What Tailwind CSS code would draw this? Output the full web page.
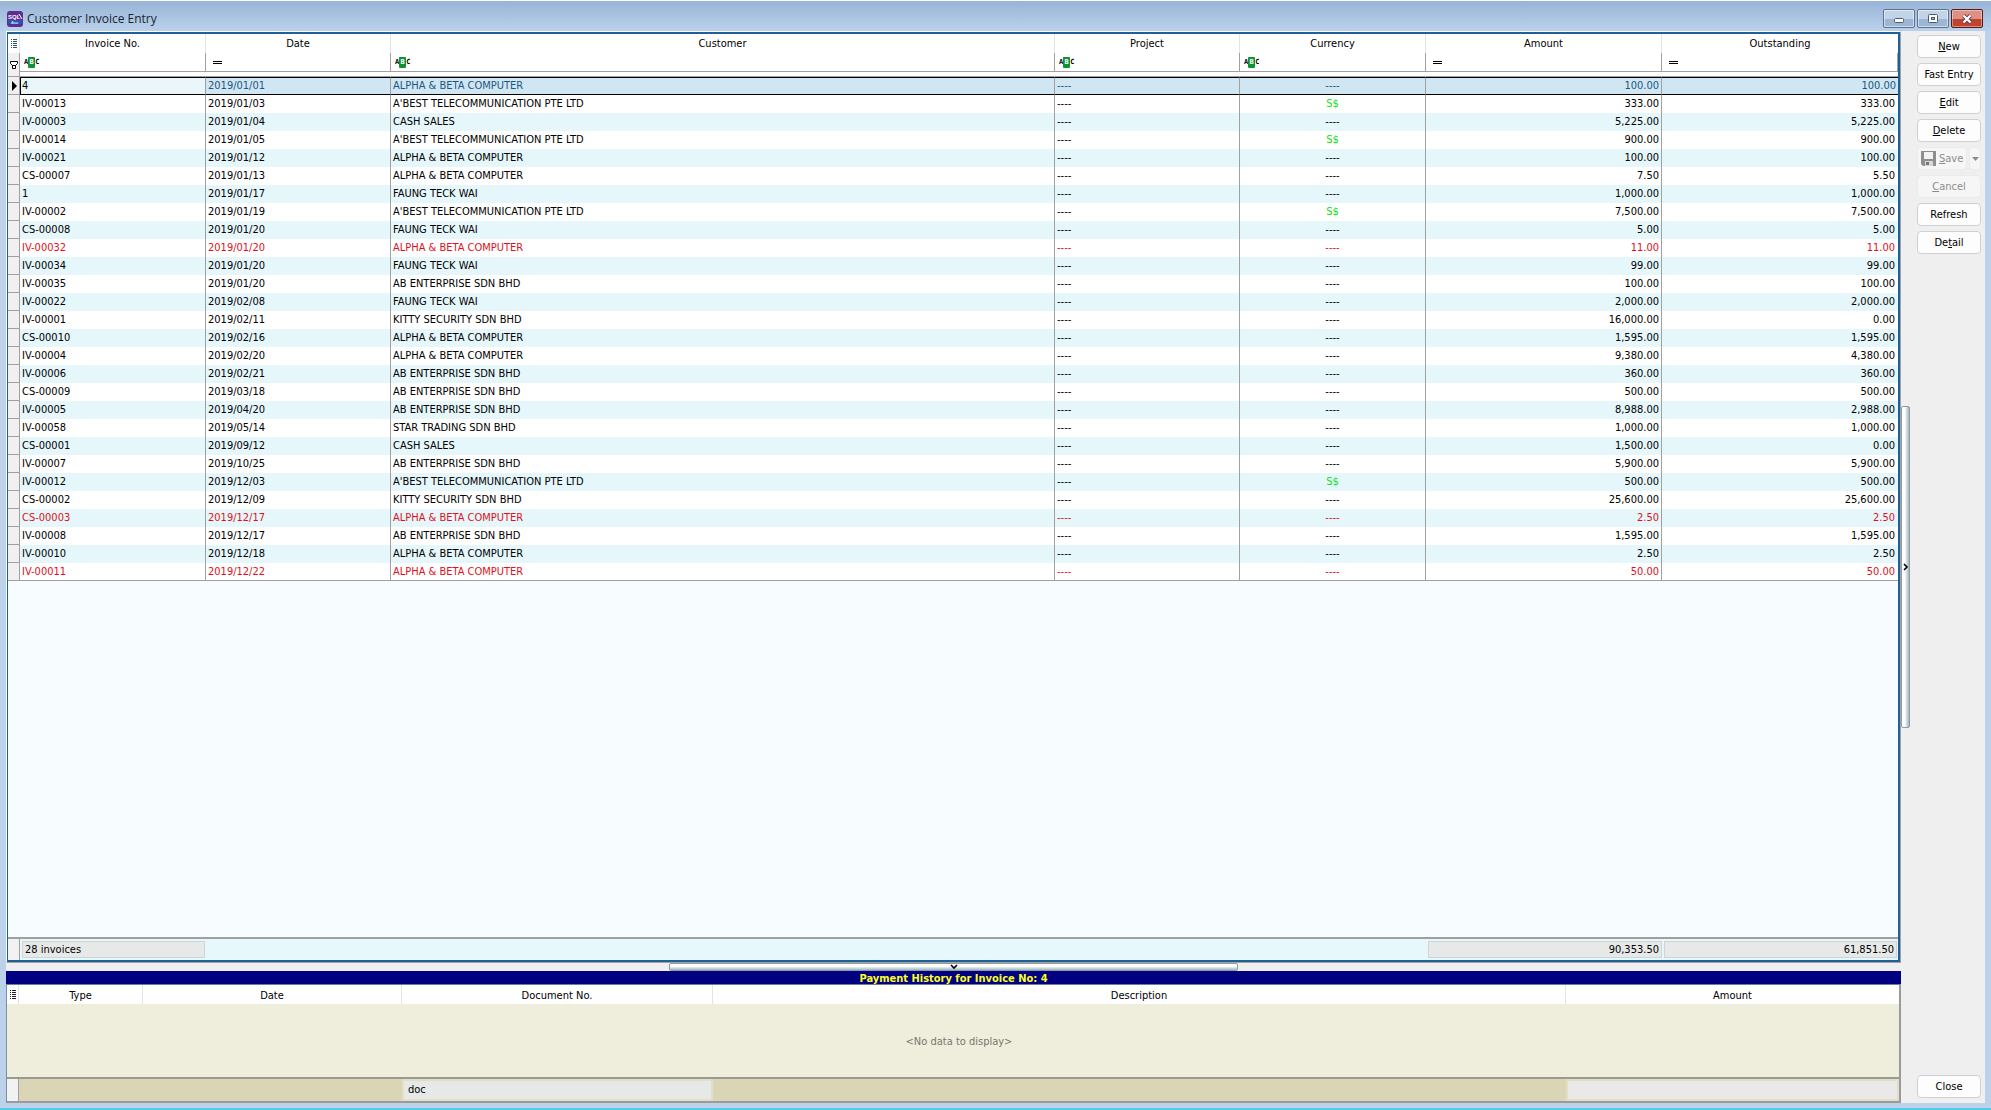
<!DOCTYPE html>
<html lang="en">

<head>
  <meta charset="utf-8">
  <meta name="viewport" content="width=device-width, initial-scale=1">
  <title>Customer Invoice Entry</title>
  <script src="https://cdn.jsdelivr.net/npm/@tailwindcss/browser@4"></script>
</head>

<body class="h-screen flex flex-col overflow-hidden bg-[#bcd1ea] border-b-2 border-[#58c8e8] font-['DejaVu_Sans_Condensed',sans-serif] text-[11px] leading-4 text-black">

  <header class="flex items-center justify-between h-[31px] shrink-0 pt-[5px] pl-[7px] pr-2 border-t border-white bg-linear-to-b from-[#98b4d6] to-[#b9d1eb]">
    <div class="flex items-center gap-1">
      <svg class="size-4" viewBox="0 0 16 16" aria-hidden="true">
        <rect width="16" height="16" rx="3" fill="#5d2d91" />
        <rect x="1" y="9" width="14" height="4" rx="1" fill="#2c56b5" />
        <text x="1" y="8" font-size="6" font-weight="bold" fill="#fff" font-family="Liberation Sans">SQL</text>
        <path d="M12 3l3 5" stroke="#fff" stroke-width="1" />
        <text x="4" y="13" font-size="4" font-weight="bold" fill="#cfe6ff" font-family="Liberation Sans">Acc</text>
      </svg>
      <h1 class="font-['Open_Sans',sans-serif] text-[12px] text-[#1a2433]">Customer Invoice Entry</h1>
    </div>
    <div class="flex gap-[2px]">
      <button aria-label="Minimize" class="w-8 h-[19px] flex items-center justify-center rounded-[2px] border border-[#5b7390] inset-ring inset-ring-white/50 bg-linear-to-b from-[#c3d4e9] from-50% to-[#9db6d3] to-50%">
        <svg class="w-3 h-3" viewBox="0 0 12 12"><rect x="1.5" y="5.5" width="9" height="4" rx="1" fill="#fff" stroke="#4d5b70" /></svg>
      </button>
      <button aria-label="Maximize" class="w-8 h-[19px] flex items-center justify-center rounded-[2px] border border-[#5b7390] inset-ring inset-ring-white/50 bg-linear-to-b from-[#c3d4e9] from-50% to-[#9db6d3] to-50%">
        <svg class="w-3 h-3" viewBox="0 0 12 12"><rect x="1.5" y="1.5" width="9" height="8" rx="1" fill="#fff" stroke="#4d5b70" /><rect x="4.5" y="4.5" width="3" height="2" fill="#9db6d3" stroke="#4d5b70" /></svg>
      </button>
      <button aria-label="Close window" class="w-8 h-[19px] flex items-center justify-center rounded-[2px] border border-[#5a1a1a] inset-ring inset-ring-white/40 bg-linear-to-b from-[#de9084] from-50% to-[#c04330] to-50%">
        <svg class="w-3 h-3" viewBox="0 0 12 12"><path d="M2.5 2.5l7 7M9.5 2.5l-7 7" stroke="#5a3a48" stroke-width="4" /><path d="M2.5 2.5l7 7M9.5 2.5l-7 7" stroke="#fff" stroke-width="2.4" /></svg>
      </button>
    </div>
  </header>

  <div class="flex-1 min-h-0 flex px-[6px] pb-[5px]">
    <div class="flex-1 min-w-0 flex flex-col bg-[#efefef]">

      <!-- invoice list -->
      <main class="flex-1 min-h-0 flex flex-col border border-t-white border-l-white border-r-[#a3a3a3] border-b-[#a3a3a3]">
        <div class="flex-1 min-h-0 flex flex-col border-2 border-l border-[#1f6096] bg-[#f6fcff]">
          <table class="w-full table-fixed border-separate border-spacing-0">
            <colgroup>
              <col class="w-3"><col class="w-[186px]"><col class="w-[185px]"><col>
              <col class="w-[185px]"><col class="w-[186px]"><col class="w-[236px]"><col class="w-[236px]">
            </colgroup>
            <thead class="bg-white">
              <tr id="head" class="h-[19px]">
                <th class="p-0 border-r border-[#e4e4e4]">
                  <svg class="block w-[11px] h-4" viewBox="0 0 11 16" aria-label="Columns"><path d="M3 3.500h1M5 3.500h4M3 5.500h1M5 5.500h4M3 7.500h1M5 7.500h4M3 9.500h1M5 9.500h4M3 11.500h1M5 11.500h4" stroke="#2a5673" /></svg>
                </th>
              </tr>
              <tr id="filters" class="h-[19px]">
                <td class="p-0 border-r border-[#a0a0a0] bg-[#f0f0f0]">
                  <svg class="block w-[11px] h-4" viewBox="0 0 11 16" aria-label="Filter"><path d="M2.500 6.500h7v2l-2 2h-3l-2-2zM4.500 10.500h3v3h-3z" fill="#fff" stroke="#000" /></svg>
                </td>
              </tr>
              <tr class="h-[5px]">
                <td class="p-0 border-r border-b border-[#a0a0a0] bg-[#f0f0f0]"></td>
                <td colspan="7" class="p-0 border-b border-[#a0a0a0]"></td>
              </tr>
            </thead>
            <tbody id="rows"></tbody>
          </table>
          <div class="flex-1"></div>
          <div class="flex h-[23px] border-t-2 border-[#a0a0a0] bg-[#e6f8fb]">
            <div class="w-3 border-r border-[#a0a0a0] bg-[#f2f2f2]"></div>
            <div class="w-[183px] m-[2px] mr-0 pl-[2px] border border-[#cfd4d4] bg-[#e7e9e8]">28 invoices</div>
            <div class="flex-1"></div>
            <div class="w-[234px] my-[2px] mr-[2px] pr-[2px] border border-[#cfd4d4] bg-[#e7e9e8] text-right">90,353.50</div>
            <div class="w-[233px] my-[2px] mr-[1px] pr-[2px] border border-[#cfd4d4] bg-[#e7e9e8] text-right">61,851.50</div>
          </div>
        </div>
      </main>

      <button aria-label="Toggle payment history" class="self-center w-[30%] h-2 flex items-center justify-center rounded-[2px] border border-[#8f9ba3] bg-linear-to-b from-white from-40% to-[#9fb6c0]">
        <svg class="w-2 h-[6px]" viewBox="0 0 8 6"><path d="M1 1l3 3 3-3" fill="none" stroke="#000" stroke-width="1.600" /></svg>
      </button>

      <!-- payment history -->
      <section class="shrink-0">
        <h2 class="h-[13px] leading-[15px] bg-[#000080] text-[#ffff20] font-bold text-center">Payment History for Invoice No: 4</h2>
        <table class="w-full table-fixed border-separate border-spacing-0 border-l border-r-2 border-y border-t-[#6f7f93] border-l-[#7f8fa3] border-r-[#9a9a9a] border-b-2 border-b-[#9a9a9a]">
          <colgroup>
            <col class="w-3"><col class="w-[124px]"><col class="w-[259px]"><col class="w-[311px]"><col><col class="w-[333px]">
          </colgroup>
          <thead class="bg-white">
            <tr class="h-[19px]">
              <th class="p-0 border-r border-[#e4e4e4]">
                <svg class="block w-[11px] h-4" viewBox="0 0 11 16" aria-label="Columns"><path d="M3 3.500h1M5 3.500h4M3 5.500h1M5 5.500h4M3 7.500h1M5 7.500h4M3 9.500h1M5 9.500h4M3 11.500h1M5 11.500h4" stroke="#222" /></svg>
              </th>
              <th class="p-0 pt-[2px] font-normal border-r border-[#e4e4e4]">Type</th>
              <th class="p-0 pt-[2px] font-normal border-r border-[#e4e4e4]">Date</th>
              <th class="p-0 pt-[2px] font-normal border-r border-[#e4e4e4]">Document No.</th>
              <th class="p-0 pt-[2px] font-normal border-r border-[#e4e4e4]">Description</th>
              <th class="p-0 pt-[2px] font-normal">Amount</th>
            </tr>
          </thead>
          <tbody>
            <tr class="h-[75px]">
              <td colspan="6" class="p-0 pt-[2px] pl-3 bg-[#efeedd] border-b-2 border-[#9a9a90] text-center text-[#77776c]">&lt;No data to display&gt;</td>
            </tr>
          </tbody>
          <tfoot>
            <tr class="h-[22px] bg-[#d9d5b5]">
              <td class="p-0 border-r border-[#a0a0a0] bg-[#f2f2f2]"></td>
              <td></td>
              <td></td>
              <td class="p-0 pl-1 border-2 border-[#e2dfc6] bg-[#e7e9e8] bg-clip-padding">doc</td>
              <td></td>
              <td class="p-0 border-2 border-[#e2dfc6] bg-[#e9e9e9]"></td>
            </tr>
          </tfoot>
        </table>
      </section>
    </div>

    <aside class="w-[84px] flex bg-[#efefef]">
      <button aria-label="Toggle button panel" class="self-center w-[9px] h-[30%] flex items-center justify-center rounded-[2px] border border-[#8f9ba3] bg-linear-to-r from-white from-40% to-[#9fb6c0]">
        <svg class="w-[6px] h-2" viewBox="0 0 6 8"><path d="M1 1l3 3-3 3" fill="none" stroke="#000" stroke-width="1.600" /></svg>
      </button>
      <div class="flex-1 flex flex-col gap-[5px] pt-1 pb-[5px] pl-[7px] pr-1">
        <button class="h-[23px] rounded border border-[#d0d0d0] bg-[#fdfdfd]"><u>N</u>ew</button>
        <button class="h-[23px] rounded border border-[#d0d0d0] bg-[#fdfdfd]">Fast Entry</button>
        <button class="h-[23px] rounded border border-[#d0d0d0] bg-[#fdfdfd]"><u>E</u>dit</button>
        <button class="h-[23px] rounded border border-[#d0d0d0] bg-[#fdfdfd]"><u>D</u>elete</button>
        <div class="flex gap-[2px] h-[23px] text-[#8c8c8c]">
          <button disabled class="flex-1 flex items-center gap-[3px] pl-[3px] rounded border border-[#ebebeb] bg-[#f6f6f6]">
            <svg class="size-[15px]" viewBox="0 0 15 15" aria-hidden="true">
              <path d="M0 0h15v15H2l-2-2z" fill="#8e8e8e" />
              <rect x="3" y="1" width="9" height="7" fill="#f2f2f2" />
              <rect x="4" y="10" width="8" height="5" fill="#d8d8d8" />
              <rect x="5" y="11" width="3" height="3" fill="#777" />
            </svg>
            <span><u>S</u>ave</span>
          </button>
          <button disabled aria-label="Save options" class="w-3 flex items-center justify-center rounded border border-[#ebebeb] bg-[#f6f6f6]">
            <svg class="w-[7px] h-1" viewBox="0 0 7 4"><path d="M0 0h7l-3.500 4z" fill="#8c8c8c" /></svg>
          </button>
        </div>
        <button disabled class="h-[23px] rounded border border-[#ebebeb] bg-[#f6f6f6] text-[#8c8c8c]"><u>C</u>ancel</button>
        <button class="h-[23px] rounded border border-[#d0d0d0] bg-[#fdfdfd]">Refresh</button>
        <button class="h-[23px] rounded border border-[#d0d0d0] bg-[#fdfdfd]">De<u>t</u>ail</button>
        <button class="mt-auto h-[23px] rounded border border-[#d0d0d0] bg-[#fdfdfd]">Close</button>
      </div>
    </aside>
  </div>

  <template id="icon-abc">
    <span class="flex items-center font-['DejaVu_Sans_Mono',monospace] font-bold text-[7px] leading-[11px]"><span>A</span><span class="w-[7px] text-center rounded-[1px] bg-[#0d9430] text-white">B</span><span>C</span></span>
  </template>
  <template id="icon-eq">
    <svg class="w-[9px] h-[3px] mx-[3px]" viewBox="0 0 9 3"><path d="M0 .5h9M0 2.500h9" stroke="#000" /></svg>
  </template>

  <script>
    const columns = [
      ['Invoice No.', 'abc'], ['Date', 'eq'], ['Customer', 'abc'], ['Project', 'abc'],
      ['Currency', 'abc'], ['Amount', 'eq'], ['Outstanding', 'eq'],
    ];
    const A = 'ALPHA & BETA COMPUTER', B = "A'BEST TELECOMMUNICATION PTE LTD", C = 'CASH SALES';
    const F = 'FAUNG TECK WAI', E = 'AB ENTERPRISE SDN BHD', K = 'KITTY SECURITY SDN BHD', S = 'STAR TRADING SDN BHD';
    // number, date, customer, currency, amount, outstanding, overdue
    const invoices = [
      ['4', '2019/01/01', A, '----', '100.00', '100.00'],
      ['IV-00013', '2019/01/03', B, 'S$', '333.00', '333.00'],
      ['IV-00003', '2019/01/04', C, '----', '5,225.00', '5,225.00'],
      ['IV-00014', '2019/01/05', B, 'S$', '900.00', '900.00'],
      ['IV-00021', '2019/01/12', A, '----', '100.00', '100.00'],
      ['CS-00007', '2019/01/13', A, '----', '7.50', '5.50'],
      ['1', '2019/01/17', F, '----', '1,000.00', '1,000.00'],
      ['IV-00002', '2019/01/19', B, 'S$', '7,500.00', '7,500.00'],
      ['CS-00008', '2019/01/20', F, '----', '5.00', '5.00'],
      ['IV-00032', '2019/01/20', A, '----', '11.00', '11.00', true],
      ['IV-00034', '2019/01/20', F, '----', '99.00', '99.00'],
      ['IV-00035', '2019/01/20', E, '----', '100.00', '100.00'],
      ['IV-00022', '2019/02/08', F, '----', '2,000.00', '2,000.00'],
      ['IV-00001', '2019/02/11', K, '----', '16,000.00', '0.00'],
      ['CS-00010', '2019/02/16', A, '----', '1,595.00', '1,595.00'],
      ['IV-00004', '2019/02/20', A, '----', '9,380.00', '4,380.00'],
      ['IV-00006', '2019/02/21', E, '----', '360.00', '360.00'],
      ['CS-00009', '2019/03/18', E, '----', '500.00', '500.00'],
      ['IV-00005', '2019/04/20', E, '----', '8,988.00', '2,988.00'],
      ['IV-00058', '2019/05/14', S, '----', '1,000.00', '1,000.00'],
      ['CS-00001', '2019/09/12', C, '----', '1,500.00', '0.00'],
      ['IV-00007', '2019/10/25', E, '----', '5,900.00', '5,900.00'],
      ['IV-00012', '2019/12/03', B, 'S$', '500.00', '500.00'],
      ['CS-00002', '2019/12/09', K, '----', '25,600.00', '25,600.00'],
      ['CS-00003', '2019/12/17', A, '----', '2.50', '2.50', true],
      ['IV-00008', '2019/12/17', E, '----', '1,595.00', '1,595.00'],
      ['IV-00010', '2019/12/18', A, '----', '2.50', '2.50'],
      ['IV-00011', '2019/12/22', A, '----', '50.00', '50.00', true],
    ];

    for (const [name, icon] of columns) {
      document.getElementById('head').insertAdjacentHTML('beforeend',
        `<th class="p-0 font-normal border-r border-[#e4e4e4] last:border-r-0">${name}</th>`);
      document.getElementById('filters').insertAdjacentHTML('beforeend',
        `<td class="p-0 border-r border-b border-[#a0a0a0]">
          <div class="flex items-center h-[18px] pl-1">
            ${document.getElementById('icon-' + icon).innerHTML}
            <input aria-label="Filter ${name}" class="flex-1 min-w-0 h-4 outline-none">
          </div>
        </td>`);
    }

    const esc = s => s.replace(/&/g, '&amp;');
    document.getElementById('rows').innerHTML = invoices.map(([no, date, customer, currency, amount, open, overdue], i) => {
      const selected = i === 0;
      const cell = 'p-0 border-r border-r-[#a0a0a0] last:border-r-0 ' +
        (selected ? 'border-y border-y-black leading-4 ' : i === 27 ? 'border-b border-b-[#a0a0a0] leading-[17px] ' : 'leading-[18px] ');
      const tone = overdue ? 'text-[#e01020]' : '';
      const row = selected ? 'bg-[#d0e6f3]' : i % 2 ? 'bg-white' : 'bg-[#e6f7fb]';
      const ink = selected ? 'text-[#1d5680]' : '';
      const first = selected ? 'border-l border-l-black pl-px bg-[#eaf6f9]' : 'pl-[2px]';
      const last = selected ? 'last:border-r last:border-r-black pr-[2px]' : 'pr-[3px]';
      return `<tr class="h-[18px] ${row} ${tone}">
        <td class="p-0 border-r border-b border-[#a0a0a0] bg-[#f0f0f0]">${selected ? '<svg class="w-[11px] h-[10px]" viewBox="0 0 11 10"><path d="M4 0v10l5-5z" fill="#000"/></svg>' : ''}</td>
        <td class="${cell} ${first}">${no}</td>
        <td class="${cell} ${ink} pl-[2px]">${date}</td>
        <td class="${cell} ${ink} pl-[2px]">${esc(customer)}</td>
        <td class="${cell} ${ink} pl-[2px]">----</td>
        <td class="${cell} ${ink} text-center ${currency === 'S$' ? 'text-[#10e020]' : ''}">${currency}</td>
        <td class="${cell} ${ink} pr-[2px] text-right">${amount}</td>
        <td class="${cell} ${ink} ${selected ? 'border-r-black' : ''} ${last} text-right">${open}</td>
      </tr>`;
    }).join('');
  </script>
</body>

</html>
